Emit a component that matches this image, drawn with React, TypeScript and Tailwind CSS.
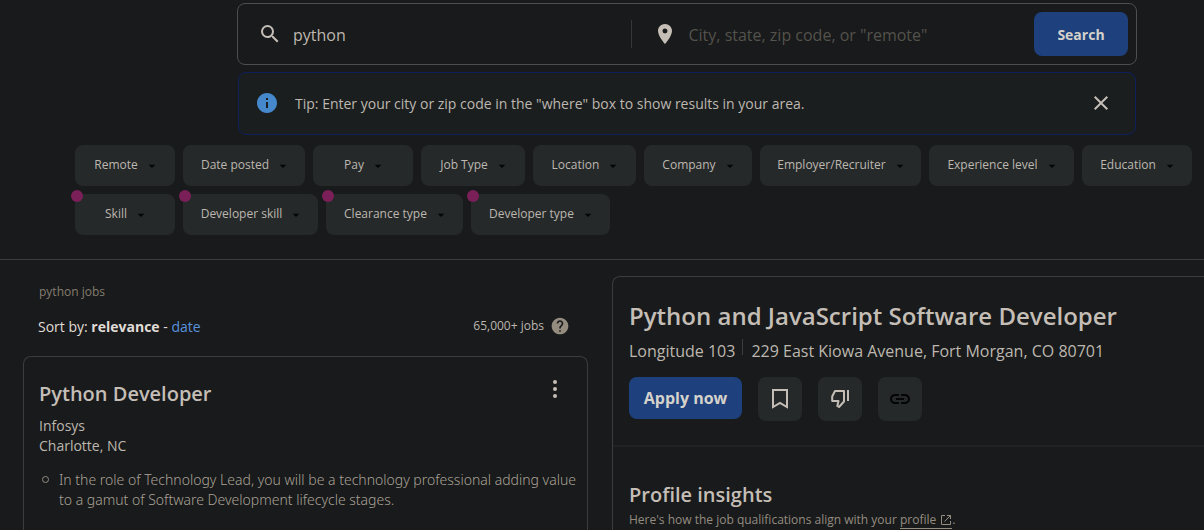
import { MdArrowDropDown, MdClose, MdHelp, MdInfo, MdLink, MdLocationOn, MdSearch } from "react-icons/md";

type Filter = { label: string; width: string; isNew?: boolean };

const filters: Filter[] = [
  { label: "Remote", width: "w-[100px]" },
  { label: "Date posted", width: "w-[122px]" },
  { label: "Pay", width: "w-[100px]" },
  { label: "Job Type", width: "w-[104px]" },
  { label: "Location", width: "w-[103px]" },
  { label: "Company", width: "w-[108px]" },
  { label: "Employer/Recruiter", width: "w-[161px]" },
  { label: "Experience level", width: "w-[145px]" },
  { label: "Education", width: "w-[110px]" },
  { label: "Skill", width: "w-[100px]", isNew: true },
  { label: "Developer skill", width: "w-[135px]", isNew: true },
  { label: "Clearance type", width: "w-[137px]", isNew: true },
  { label: "Developer type", width: "w-[139px]", isNew: true },
];

function FilterButton({ label, width, isNew }: Filter) {
  return (
    <li className={`relative ${width}`}>
      <button
        type="button"
        className="flex h-[41px] w-full items-center justify-center gap-1.5 rounded-lg bg-[#25292a] pb-0.5 pl-1 text-[12px] leading-4 whitespace-nowrap text-[#bdb7af]"
      >
        {label}
        <MdArrowDropDown className="mt-0.5 size-4 shrink-0 text-[#050505]" aria-hidden />
      </button>
      {isNew && <span className="absolute -top-1 -left-1 size-3 rounded-full bg-[#7a1f57]" />}
    </li>
  );
}

function SearchBar() {
  return (
    <form className="flex h-[62px] items-center rounded-lg border border-[#4b4f52] pr-2 pl-5" onSubmit={(e) => e.preventDefault()}>
      <label htmlFor="what" aria-label="What">
        <MdSearch className="size-6 text-[#c4beb6]" aria-hidden />
      </label>
      <input
        id="what"
        defaultValue="python"
        className="ml-[11px] h-10 min-w-0 flex-1 bg-transparent pt-0.5 text-[16px] text-[#bdb7af] outline-none"
      />
      <span className="h-7 w-px bg-[#33373a]" />
      <label htmlFor="where" aria-label="Where" className="ml-[21px]">
        <MdLocationOn className="size-6 text-[#c4beb6]" aria-hidden />
      </label>
      <input
        id="where"
        placeholder={'City, state, zip code, or "remote"'}
        className="mr-2 ml-3 h-10 min-w-0 flex-1 bg-transparent pt-0.5 text-[16px] text-[#bdb7af] outline-none placeholder:text-[#54524c]"
      />
      <button type="submit" className="h-11 w-[94px] rounded-lg bg-[#1e417d] text-[14px] font-bold text-[#d5d1cb]">
        Search
      </button>
    </form>
  );
}

function Tip() {
  return (
    <div className="mx-px mt-[7px] flex h-[63px] items-center rounded-lg border border-[#0f1f5c] bg-[#1b1e1f] pr-[22px] pb-px pl-4">
      <MdInfo className="size-6 text-[#4688cc]" aria-hidden />
      <p className="ml-4 flex-1 text-[14px] text-[#bdb7af]">
        Tip: Enter your city or zip code in the "where" box to show results in your area.
      </p>
      <button type="button" aria-label="Close">
        <MdClose className="size-6 text-[#c4beb6]" aria-hidden />
      </button>
    </div>
  );
}

function JobCard() {
  return (
    <article className="mt-[19px] flex-1 rounded-t-lg border border-b-0 border-[#3a3d3f] pt-[22px] pl-[15px]">
      <div className="flex items-start justify-between">
        <h2 className="text-[20px] leading-[30px] font-semibold text-[#c4beb6]">
          <a href="#python-developer">Python Developer</a>
        </h2>
        <button type="button" aria-label="More options" className="mr-5">
          <svg viewBox="0 0 24 20" className="h-5 w-6 fill-[#c4beb6]" aria-hidden>
            <circle cx="12" cy="3" r="2" />
            <circle cx="12" cy="10" r="2" />
            <circle cx="12" cy="17" r="2" />
          </svg>
        </button>
      </div>
      <div className="mt-[7px] text-[14px] leading-5 text-[#bdb7af]">
        <p>Infosys</p>
        <p>Charlotte, NC</p>
      </div>
      <ul className="mt-[14px] font-['Noto_Sans',sans-serif] text-[14px] leading-5 font-light text-[#aaa196]">
        <li className="flex">
          <span className="mt-[6px] mr-[10px] ml-[3px] size-[7px] shrink-0 rounded-full border border-[#958c80]" />
          <span className="whitespace-nowrap">
            In the role of Technology Lead, you will be a technology professional adding value
            <br />
            to a gamut of Software Development lifecycle stages.
          </span>
        </li>
      </ul>
    </article>
  );
}

function JobDetail() {
  const iconButton = "flex size-11 items-center justify-center rounded-lg bg-[#25292a]";
  return (
    <section className="mt-4 rounded-tl-lg border-t border-l border-[#3a3d3f]">
      <div className="border-b-2 border-[#202324] pt-[23px] pb-6 pl-4">
        <h1 className="text-[24px] leading-8 font-semibold whitespace-nowrap text-[#c4beb6]">Python and JavaScript Software Developer</h1>
        <div className="mt-[5px] flex h-7 items-center text-[16px] leading-7 whitespace-nowrap text-[#bdb7af]">
          <span>Longitude 103</span>
          <span className="mr-2 mb-2 ml-[7px] h-4 w-px bg-[#3a3d3f]" />
          <span>229 East Kiowa Avenue, Fort Morgan, CO 80701</span>
        </div>
        <div className="mt-3 flex items-start gap-4">
          <button type="button" className="h-[42px] w-[113px] rounded-lg bg-[#1e417d] text-[16px] font-bold text-[#d5d1cb]">
            Apply now
          </button>
          <button type="button" aria-label="Save job" className={iconButton}>
            <svg viewBox="0 0 24 24" className="size-6 fill-none stroke-[#c4beb6] stroke-2" aria-hidden>
              <path d="M5 3h14v17l-7-4-7 4z" />
            </svg>
          </button>
          <button type="button" aria-label="Not interested" className={iconButton}>
            <svg viewBox="0 0 24 24" className="size-6 fill-none stroke-[#c4beb6] stroke-2" aria-hidden>
              <path d="M16 4H7L4.200 9.500v4.500h6.300l-1.200 5 1.700 1L16 14.500z" strokeLinejoin="round" />
              <path d="M20 3v11" />
            </svg>
          </button>
          <button type="button" aria-label="Copy link" className={iconButton}>
            <MdLink className="size-6 text-[#050505]" aria-hidden />
          </button>
        </div>
      </div>
      <div className="pt-8 pl-4">
        <h2 className="text-[20px] leading-8 font-semibold text-[#c4beb6]">Profile insights</h2>
        <p className="text-[12px] leading-[18px] whitespace-nowrap text-[#958c80]">
          Here's how the job qualifications align with your{" "}
          <a href="#profile" className="inline-flex h-[17px] items-center gap-1 border-b border-[#958c80]">
            profile
            <svg viewBox="0 0 12 12" className="size-3 fill-none stroke-current" aria-hidden>
              <path d="M5 1.500H1.500v9h9V7M7 1.500h3.500V5M10.500 1.500L4.500 7.500" />
            </svg>
          </a>
          .
        </p>
      </div>
    </section>
  );
}

export default function App() {
  return (
    <div className="flex h-screen flex-col overflow-hidden bg-[#181a1b] font-['Open_Sans','Noto_Sans',sans-serif]">
      <header className="border-b border-[#3a3d3f] pt-[3px] pb-6">
        <div className="pr-[67px] pl-[237px]">
          <SearchBar />
          <Tip />
        </div>
        <ul className="mt-[10px] flex flex-wrap gap-2 pr-3 pl-[75px]">
          {filters.map((filter) => (
            <FilterButton key={filter.label} {...filter} />
          ))}
        </ul>
      </header>
      <main className="grid flex-1 grid-cols-[565fr_592fr] gap-6 pl-[23px]">
        <section className="flex min-w-0 flex-col">
          <p className="mt-6 pl-4 text-[12px] leading-4 text-[#857c6f]">python jobs</p>
          <div className="mt-[15px] flex h-[22px] items-center justify-between pr-[18px] pl-[15px] text-[14px] text-[#e0ddd8]">
            <p>
              Sort by: <strong>relevance</strong> - <a href="#date" className="text-[#5a93dd]">date</a>
            </p>
            <p className="flex items-center gap-1.5 text-[12px] text-[#bdb7af]">
              65,000+ jobs
              <MdHelp className="size-5 text-[#958c80]" aria-label="Help" />
            </p>
          </div>
          <JobCard />
        </section>
        <JobDetail />
      </main>
    </div>
  );
}
